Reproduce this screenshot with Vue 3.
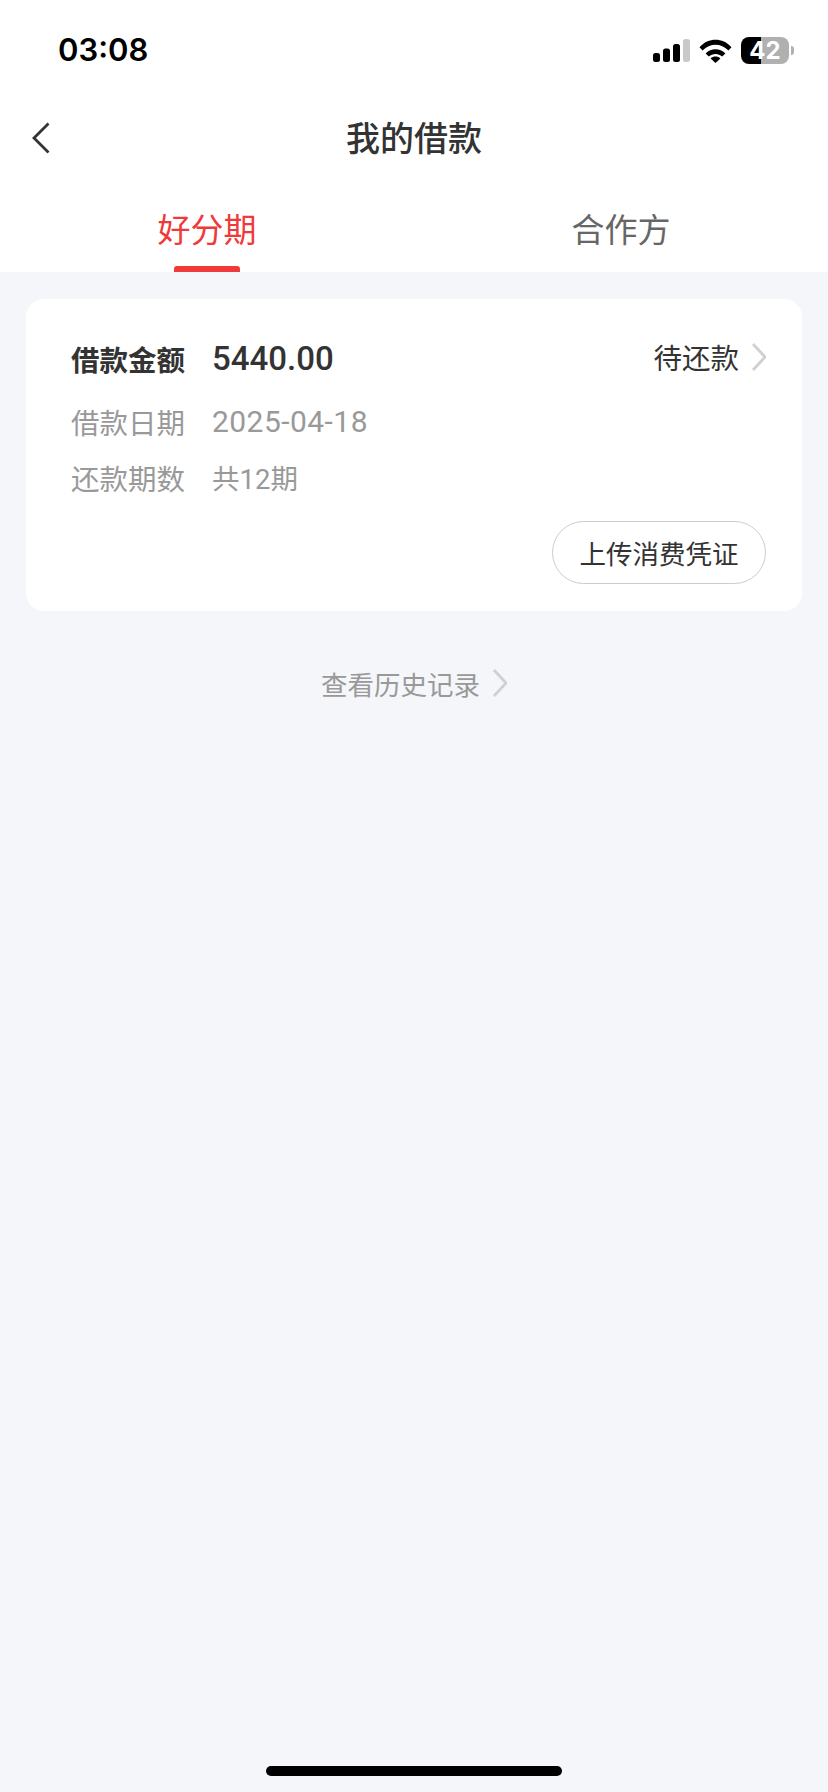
<template>
  <div class="page">
    <div class="top">
      <div class="status-bar">
        <span class="time">03:08</span>
        <div class="status-icons">
          <svg class="signal" width="37" height="23" viewBox="0 0 37 23">
            <rect x="0" y="14" width="7" height="9" rx="2.5" fill="#000" />
            <rect x="10" y="9.5" width="7" height="13.5" rx="2.5" fill="#000" />
            <rect x="20" y="5" width="7" height="18" rx="2.5" fill="#000" />
            <rect x="30" y="0" width="7" height="23" rx="2.5" fill="#c9c9c9" />
          </svg>
          <svg class="wifi" width="33" height="24" viewBox="0 0 33 24">
            <path d="M0.5 8.2 C9.5 -1.6 23.5 -1.6 32.5 8.2 L29.4 11.4 C22 3.8 11 3.8 3.6 11.4 Z" fill="#000" />
            <path d="M6.6 14.4 C12 8.8 21 8.8 26.4 14.4 L23.2 17.6 C19.4 14 13.6 14 9.8 17.6 Z" fill="#000" />
            <path d="M11.6 19.4 C14.4 17 18.6 17 21.4 19.4 L16.5 24 Z" fill="#000" />
          </svg>
          <div class="battery"><span>42</span></div>
          <div class="battery-nub"></div>
        </div>
      </div>
      <div class="nav">
        <svg class="back" width="18" height="32" viewBox="0 0 18 32">
          <path d="M16.5 1.5 L2 16 L16.5 30.5" fill="none" stroke="#333" stroke-width="2.8" />
        </svg>
        <span class="nav-title">我的借款</span>
      </div>
      <div class="tabs">
        <div v-for="(tab, i) in tabs" :key="tab" class="tab" :class="{ active: i === active }">
          <span class="tab-text">{{ tab }}</span>
          <div class="tab-line"></div>
        </div>
      </div>
    </div>

    <div class="card">
      <div class="row row-main">
        <span class="row-label">借款金额</span>
        <span class="amount">5440.00</span>
        <span class="state">待还款</span>
        <svg class="arrow" width="14" height="28" viewBox="0 0 14 28">
          <path d="M1 1 L13 14 L1 27" fill="none" stroke="#d0d0d0" stroke-width="2.8" />
        </svg>
      </div>
      <div class="row row-date">
        <span class="row-label">借款日期</span>
        <span class="row-value date">2025-04-18</span>
      </div>
      <div class="row row-term">
        <span class="row-label">还款期数</span>
        <span class="row-value term">共12期</span>
      </div>
      <button class="upload-btn">上传消费凭证</button>
    </div>

    <div class="history">
      <span>查看历史记录</span>
      <svg width="14" height="28" viewBox="0 0 14 28">
        <path d="M1 1 L13 14 L1 27" fill="none" stroke="#d0d0d0" stroke-width="2.8" />
      </svg>
    </div>

    <div class="home-bar"></div>
  </div>
</template>

<script setup>
const tabs = ['好分期', '合作方'];
const active = 0;
</script>

<style>
html, body {
  margin: 0;
  padding: 0;
}
</style>

<style scoped>
.page {
  width: 828px;
  height: 1792px;
  display: flex;
  flex-direction: column;
  background: #f4f6fa;
  font-family: Roboto, "Noto Sans CJK SC", sans-serif;
  overflow: hidden;
}
.top {
  background: #fff;
}
.status-bar {
  height: 88px;
  display: flex;
  justify-content: space-between;
  align-items: flex-start;
  padding: 0 34px 0 58px;
}
.time {
  margin-top: 30px;
  font-family: Inter, sans-serif;
  font-size: 31px;
  line-height: 40px;
  font-weight: 600;
  color: #000;
}
.status-icons {
  display: flex;
  align-items: center;
  margin-top: 37px;
  height: 27px;
}
.wifi {
  margin-left: 9px;
}
.battery {
  width: 48px;
  height: 27px;
  margin-left: 9px;
  border-radius: 8px;
  background: linear-gradient(90deg, #000 0, #000 20px, #b0b0b0 20px, #b0b0b0 100%);
  display: flex;
  align-items: center;
  justify-content: center;
}
.battery span {
  font-family: Inter, sans-serif;
  font-size: 24px;
  font-weight: 700;
  line-height: 27px;
  color: #fff;
}
.battery-nub {
  width: 3px;
  height: 9px;
  margin-left: 2px;
  border-radius: 0 3px 3px 0;
  background: #b0b0b0;
}
.nav {
  height: 100px;
  box-sizing: border-box;
  padding-bottom: 3px;
  position: relative;
  display: flex;
  align-items: center;
  justify-content: center;
}
.back {
  position: absolute;
  left: 32px;
  top: 34px;
}
.nav-title {
  font-size: 34px;
  font-weight: 500;
  color: #333;
}
.tabs {
  display: grid;
  grid-template-columns: 1fr 1fr;
  height: 84px;
}
.tab {
  display: flex;
  flex-direction: column;
  align-items: center;
  padding-top: 20px;
}
.tab-text {
  font-size: 33px;
  line-height: 46px;
  color: #666;
}
.tab-line {
  width: 66px;
  height: 6px;
  margin-top: 12px;
  border-radius: 3px 3px 0 0;
}
.tab.active .tab-text {
  color: #f03a3a;
}
.tab.active .tab-line {
  background: #f03a3a;
}
.card {
  margin: 27px 26px 0;
  padding: 37px 36px 27px 45px;
  background: #fff;
  border-radius: 18px;
  display: flex;
  flex-direction: column;
}
.row {
  display: flex;
  align-items: center;
  height: 44px;
}
.row-date {
  margin-top: 19px;
}
.row-term {
  margin-top: 12px;
}
.row-label {
  width: 141px;
  font-size: 28.5px;
  color: #999;
}
.row-value {
  color: #999;
}
.row-value.date {
  font-size: 30px;
  letter-spacing: 0.45px;
}
.row-value.term {
  font-size: 27.5px;
}
.row-main .row-label {
  font-weight: 700;
  color: #333;
}
.amount {
  font-size: 33px;
  font-weight: 500;
  color: #333;
}
.state {
  margin-left: auto;
  margin-bottom: 4px;
  font-size: 28.5px;
  color: #333;
}
.arrow {
  margin-left: 13px;
  margin-bottom: 2px;
}
.upload-btn {
  align-self: flex-end;
  width: 214px;
  height: 63px;
  margin-top: 22px;
  padding: 0;
  background: #fff;
  border: 1px solid #ccc;
  border-radius: 32px;
  font-family: inherit;
  font-size: 26.5px;
  color: #333;
}
.history {
  margin-top: 52px;
  height: 40px;
  display: flex;
  align-items: center;
  justify-content: center;
  gap: 13px;
  font-size: 26.5px;
  color: #999;
}
.home-bar {
  width: 296px;
  height: 10px;
  margin: auto auto 16px;
  border-radius: 5px;
  background: #000;
}
</style>
